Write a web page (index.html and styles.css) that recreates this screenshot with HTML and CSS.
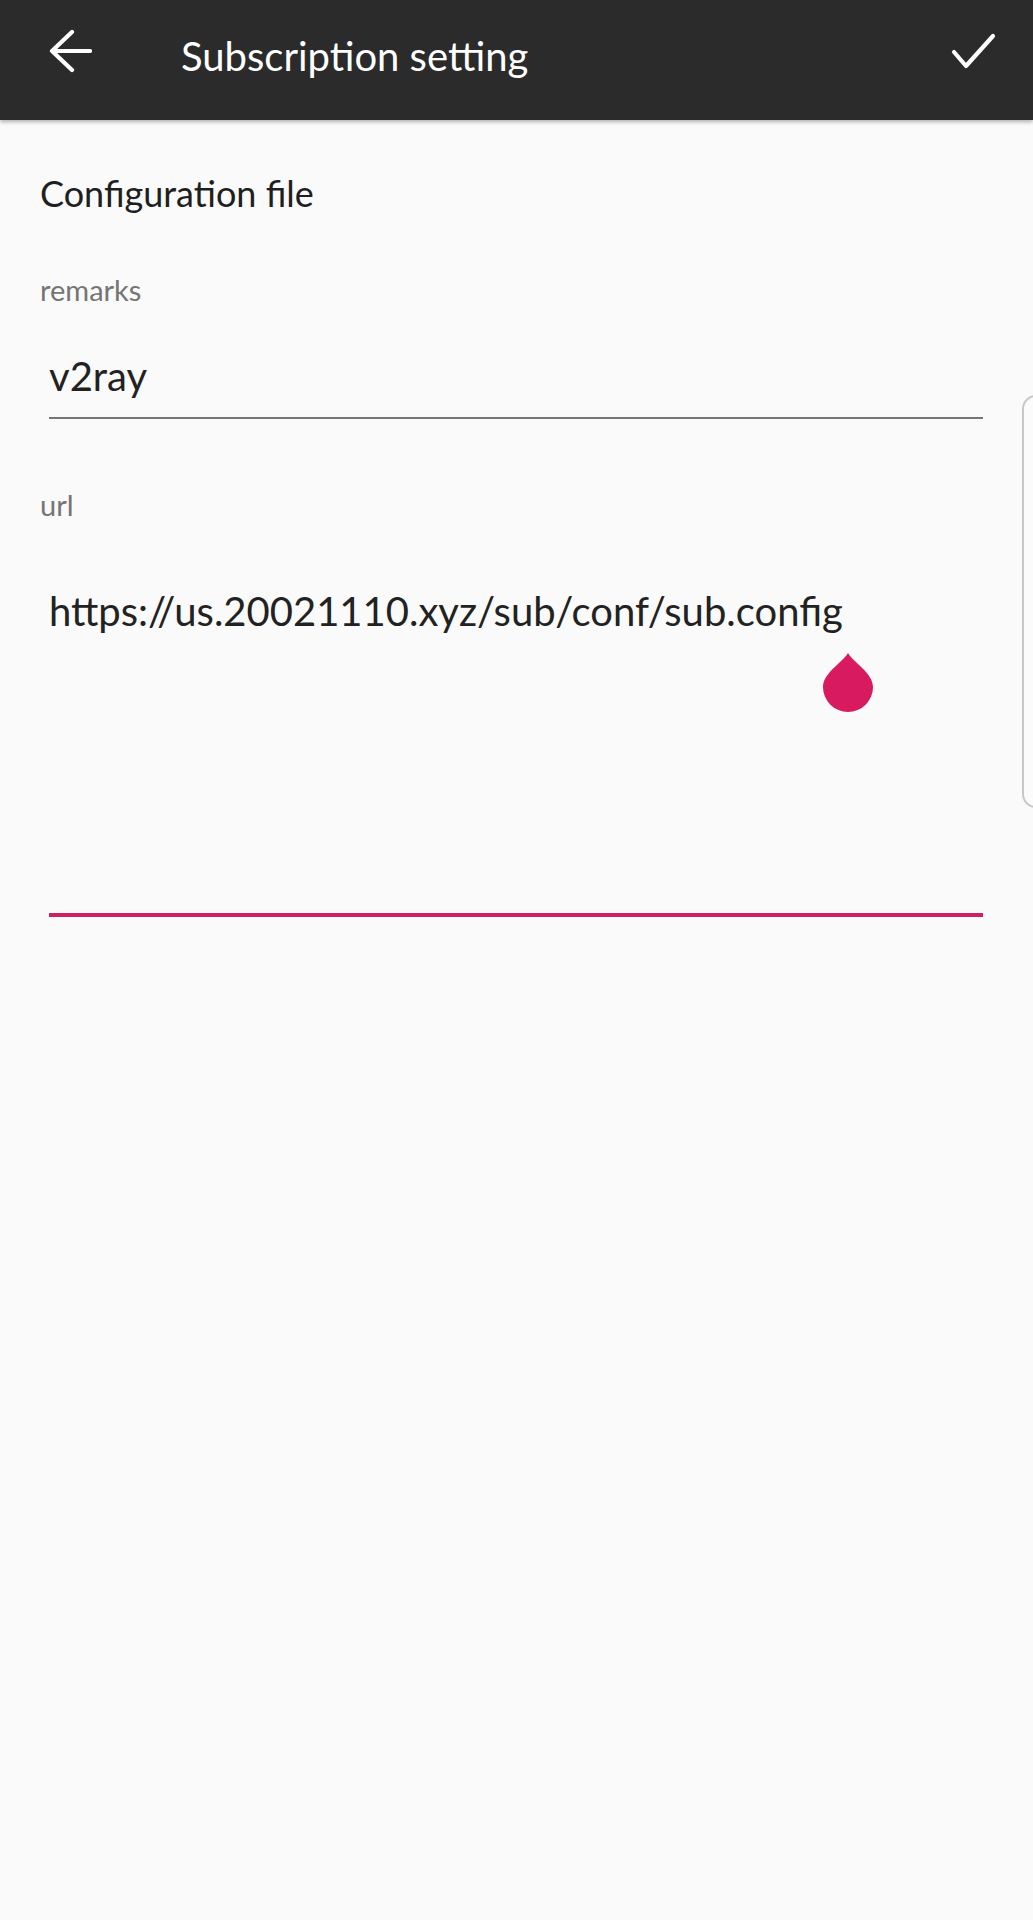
FILE: index.html
```html
<!DOCTYPE html>
<html>
<head>
<meta charset="utf-8">
<link rel="stylesheet" href="styles.css">
</head>
<body>
<header class="appbar">
  <button class="icon-btn back" aria-label="Back">
    <svg width="44" height="44" viewBox="0 0 44 44"><path d="M42 22H4M24 3L4 22l20 19" fill="none" stroke="#fff" stroke-width="4.2" stroke-linecap="round" stroke-linejoin="round"/></svg>
  </button>
  <h1 class="title">Subscription setting</h1>
  <button class="icon-btn check" aria-label="Save">
    <svg width="48" height="40" viewBox="0 0 48 40"><path d="M5 21l12 14L44 5" fill="none" stroke="#fff" stroke-width="4.2" stroke-linecap="round" stroke-linejoin="round"/></svg>
  </button>
</header>
<main class="content">
  <h2 class="section">Configuration file</h2>
  <div class="field">
    <label class="label">remarks</label>
    <div class="value remarks">v2ray</div>
  </div>
  <div class="field url-field">
    <label class="label">url</label>
    <div class="value url">https://us.20021110.xyz/sub/conf/sub.config<svg class="handle" width="52" height="60" viewBox="0 0 52 60"><path d="M26 0C32 10 51 20 51 34A25 25 0 0 1 1 34C1 20 20 10 26 0Z" fill="#d81b60"/></svg></div>
  </div>
</main>
<div class="edge-panel"></div>
</body>
</html>
```
FILE: styles.css
```css
html, body { margin: 0; padding: 0; }
body {
  width: 1033px;
  height: 1920px;
  background: #fafafa;
  font-family: "Lato", "Noto Sans", sans-serif;
  color: #222;
  position: relative;
  overflow: hidden;
}
.appbar {
  height: 120px;
  background: #2b2b2b;
  display: flex;
  align-items: center;
  box-shadow: 0 2px 4px rgba(0,0,0,0.3);
  position: relative;
}
.icon-btn {
  background: none;
  border: 0;
  padding: 0;
  display: flex;
  align-self: flex-start;
}
.back { margin: 29px 0 0 48px; }
.title {
  margin: -8px 0 0 89px;
  font-weight: 400;
  font-size: 40px;
  color: #fff;
  flex: 1;
}
.check { margin: 31px 36px 0 0; }
.content {
  padding: 0 50px 0 40px;
}
.section {
  margin: 0;
  padding-top: 48px;
  font-weight: 400;
  font-size: 36px;
  line-height: 50px;
  color: #1f1f1f;
}
.label {
  display: block;
  color: #757575;
  font-size: 29px;
  line-height: 34px;
  margin-top: 55px;
}
.value {
  margin-left: 9px;
  font-size: 40px;
  line-height: 48px;
  color: #222;
  position: relative;
}
.remarks {
  margin-top: 45px;
  padding-bottom: 17px;
  border-bottom: 2px solid #757575;
}
.url-field .label { margin-top: 69px; }
.url {
  margin-top: 65px;
  height: 326px;
  border-bottom: 4px solid #cc2163;
}
.handle {
  position: absolute;
  left: 773px;
  top: 66px;
}
.edge-panel {
  position: absolute;
  left: 1022px;
  top: 395px;
  width: 30px;
  height: 409px;
  border: 2px solid #c8c8c8;
  border-radius: 14px;
  background: #fbfbfb;
}
```
